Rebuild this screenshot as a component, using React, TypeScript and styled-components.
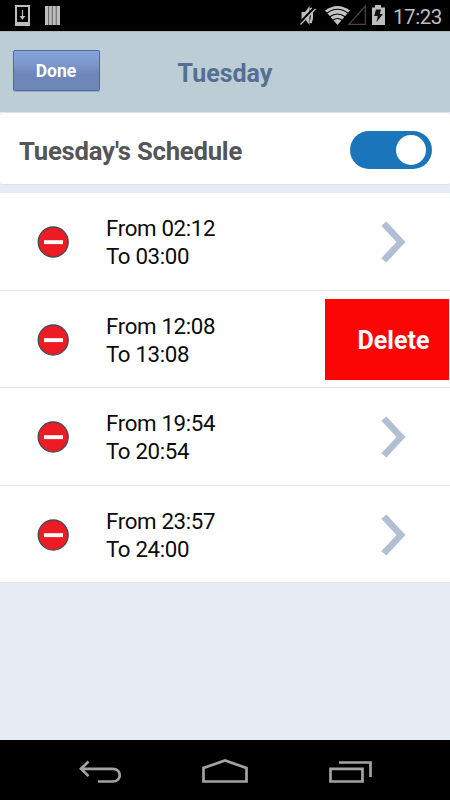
import React from "react";
import styled, { createGlobalStyle } from "styled-components";

const GlobalStyle = createGlobalStyle`
  * { box-sizing: border-box; }
  body { margin: 0; background: #e7ebf3; font-family: Roboto, sans-serif; }
`;

const Screen = styled.div`
  width: 450px;
  height: 800px;
  display: flex;
  flex-direction: column;
  background: #e7ebf3;
  overflow: hidden;
`;

const StatusBar = styled.div`
  height: 31px;
  flex: none;
  background: #000;
  display: flex;
  justify-content: space-between;
`;

const StatusIcons = styled.svg`
  display: block;
  flex: none;
`;

const StatusRight = styled.div`
  display: flex;
`;

const Clock = styled.span`
  width: 59px;
  padding-left: 2px;
  line-height: 34px;
  font-size: 20.5px;
  letter-spacing: -0.45px;
  color: #bebebe;
`;

const Header = styled.header`
  height: 81px;
  flex: none;
  display: grid;
  grid-template-columns: 100px 250px 100px;
  align-items: center;
  background: #bccdd5;
  border-top: 1px solid #a9b9c0;
`;

const DoneButton = styled.button`
  width: 87px;
  height: 41px;
  margin: 0 0 3px 13px;
  padding: 2px 1px 0 0;
  border: 1px solid #456bb3;
  border-radius: 2px;
  background: linear-gradient(#87a4d8 0%, #7b97ca 35%, #6e86b9 60%, #6e86b6 100%);
  box-shadow: 0 1px 1px rgba(80, 100, 120, 0.3);
  color: #fff;
  font: 700 17.5px/37px Roboto, sans-serif;
`;

const Title = styled.h1`
  margin: 3px 0 0;
  text-align: center;
  font-size: 25px;
  line-height: 30px;
  font-weight: 700;
  color: #536f91;
`;

const ScheduleCard = styled.section`
  height: 73px;
  flex: none;
  padding: 3px 18px 0 19px;
  display: flex;
  align-items: center;
  justify-content: space-between;
  background: #fff;
  border-top: 1px solid #dce5e9;
  border-bottom: 1px solid #dfe1e7;
  border-radius: 3px;
`;

const ScheduleTitle = styled.h2`
  margin: 1px 0 0;
  font-size: 25.7px;
  line-height: 32px;
  font-weight: 700;
  letter-spacing: -0.23px;
  color: #535557;
`;

const Toggle = styled.div`
  width: 82px;
  height: 38px;
  padding-right: 6px;
  display: flex;
  align-items: center;
  justify-content: flex-end;
  border-radius: 19px;
  background: #1b75bb;
`;

const Knob = styled.span`
  width: 30px;
  height: 30px;
  border-radius: 50%;
  background: #fff;
`;

const List = styled.main`
  margin-top: 8px;
  height: 390px;
  flex: none;
  display: grid;
  grid-template-rows: repeat(4, 97.5px);
`;

const Row = styled.div`
  display: grid;
  grid-template-columns: 107px 1fr auto;
  align-items: center;
  padding-top: 1.8px;
  background: #fff;
  border-bottom: 1px solid #e4e4e4;
`;

const RemoveIcon = styled.svg`
  display: block;
  margin-left: 37px;
`;

const Times = styled.div`
  margin-left: -1px;
  font-size: 22.3px;
  line-height: 28px;
  letter-spacing: -0.36px;
  color: #0b0b0b;
`;

const Chevron = styled.svg`
  display: block;
  margin-right: 44px;
`;

const DeleteButton = styled.button`
  width: 124px;
  height: 81px;
  margin: 0 1px 0 0;
  padding: 3px 0 0 13px;
  border: 0;
  background: #fb0505;
  color: #fff;
  font: 700 25px/30px Roboto, sans-serif;
`;

const NavBar = styled.nav`
  height: 60px;
  flex: none;
  margin-top: auto;
  padding: 4px 77px 0;
  display: flex;
  align-items: center;
  justify-content: space-between;
  background: #000;
`;

const NavIcon = styled.svg`
  display: block;
  fill: none;
  stroke: #a3a3a3;
  stroke-width: 2.7;
`;

const entries = [
  { from: "02:12", to: "03:00", deleting: false },
  { from: "12:08", to: "13:08", deleting: true },
  { from: "19:54", to: "20:54", deleting: false },
  { from: "23:57", to: "24:00", deleting: false },
];

export default function App() {
  return (
    <>
      <GlobalStyle />
      <Screen>
        <StatusBar>
          <StatusIcons width="70" height="31" viewBox="0 0 70 31">
            <path d="M15 5h15v21H15zM17 7v15h11V7z" fill="#bebebe" fillRule="evenodd" />
            <path d="M22.5 10v8" stroke="#bebebe" strokeWidth="1.2" />
            <path d="M19.5 16h6l-3 3.8z" fill="#bebebe" />
            <path d="M45 6h15v19H45z" fill="#bebebe" />
            <path d="M48.6 6v19M52.3 6v19M56.2 6v19" stroke="#555" strokeWidth="0.9" />
          </StatusIcons>
          <StatusRight>
            <StatusIcons width="92" height="31" viewBox="299 0 92 31">
              <path d="M301.5 12h3.5l4.5-6v19l-4.5-6h-3.5z" fill="#bebebe" />
              <path d="M310.5 8q3 7.5 0 15" fill="none" stroke="#bebebe" strokeWidth="2.5" />
              <path d="M299 23.5L313.5 8.5" stroke="#000" strokeWidth="2" />
              <path d="M300.5 24.5L315.5 9" stroke="#bebebe" strokeWidth="1.3" />
              <path d="M325 10.5Q337.5 1.5 350 10.5L337.5 25z" fill="#c4c4c4" />
              <path d="M326.5 13.5Q337.5 5 348.5 13.5M329.5 17Q337.5 11 345.5 17M332.5 20.5Q337.5 16.5 342.5 20.5" fill="none" stroke="#000" strokeWidth="1.1" />
              <path d="M349 24.3L365.3 6v18.3z" fill="none" stroke="#484848" strokeWidth="1.2" />
              <path d="M372 7.5h3v-2.5h6v2.5h4v17.5h-13z" fill="#bebebe" />
              <path d="M376 9.5h5l-1.2 4.5h3.2l-6.5 8 1.2-6h-3.5z" fill="#111" />
            </StatusIcons>
            <Clock>17:23</Clock>
          </StatusRight>
        </StatusBar>
        <Header>
          <DoneButton>Done</DoneButton>
          <Title>Tuesday</Title>
        </Header>
        <ScheduleCard>
          <ScheduleTitle>Tuesday's Schedule</ScheduleTitle>
          <Toggle role="switch" aria-checked="true"><Knob /></Toggle>
        </ScheduleCard>
        <List>
          {entries.map((entry) => (
            <Row key={entry.from}>
              <RemoveIcon width="32" height="32" viewBox="0 0 32 32">
                <circle cx="16.2" cy="16" r="15" fill="#ed1c24" stroke="#414b50" strokeWidth="1.3" />
                <path d="M7 14.200h19v3.900H7z" fill="#fff" />
              </RemoveIcon>
              <Times>
                <div>From {entry.from}</div>
                <div>To {entry.to}</div>
              </Times>
              {entry.deleting ? (
                <DeleteButton>Delete</DeleteButton>
              ) : (
                <Chevron width="25" height="42" viewBox="0 0 25 42">
                  <path d="M0.300 4.800L5.400 0.500 24.500 21 5.400 41.500 0.300 37.200 15.500 21z" fill="#b2bfd2" />
                </Chevron>
              )}
            </Row>
          ))}
        </List>
        <NavBar>
          <NavIcon width="46" height="30" viewBox="77 757 46 30">
            <path d="M81 768.800h31.500c9.700 0 9.700 12.700 0 12.700H98M88.500 761.500l-7.500 7.300 7.500 7.300" />
          </NavIcon>
          <NavIcon width="50" height="30" viewBox="200 757 50 30">
            <path d="M203.500 781.500v-13.500l21.500-7.500 21.500 7.500v13.500z" />
          </NavIcon>
          <NavIcon width="46" height="30" viewBox="328 757 46 30">
            <path d="M331.500 768.800h32v12.700h-32zM340 762.500h31.500V777" />
          </NavIcon>
        </NavBar>
      </Screen>
    </>
  );
}
